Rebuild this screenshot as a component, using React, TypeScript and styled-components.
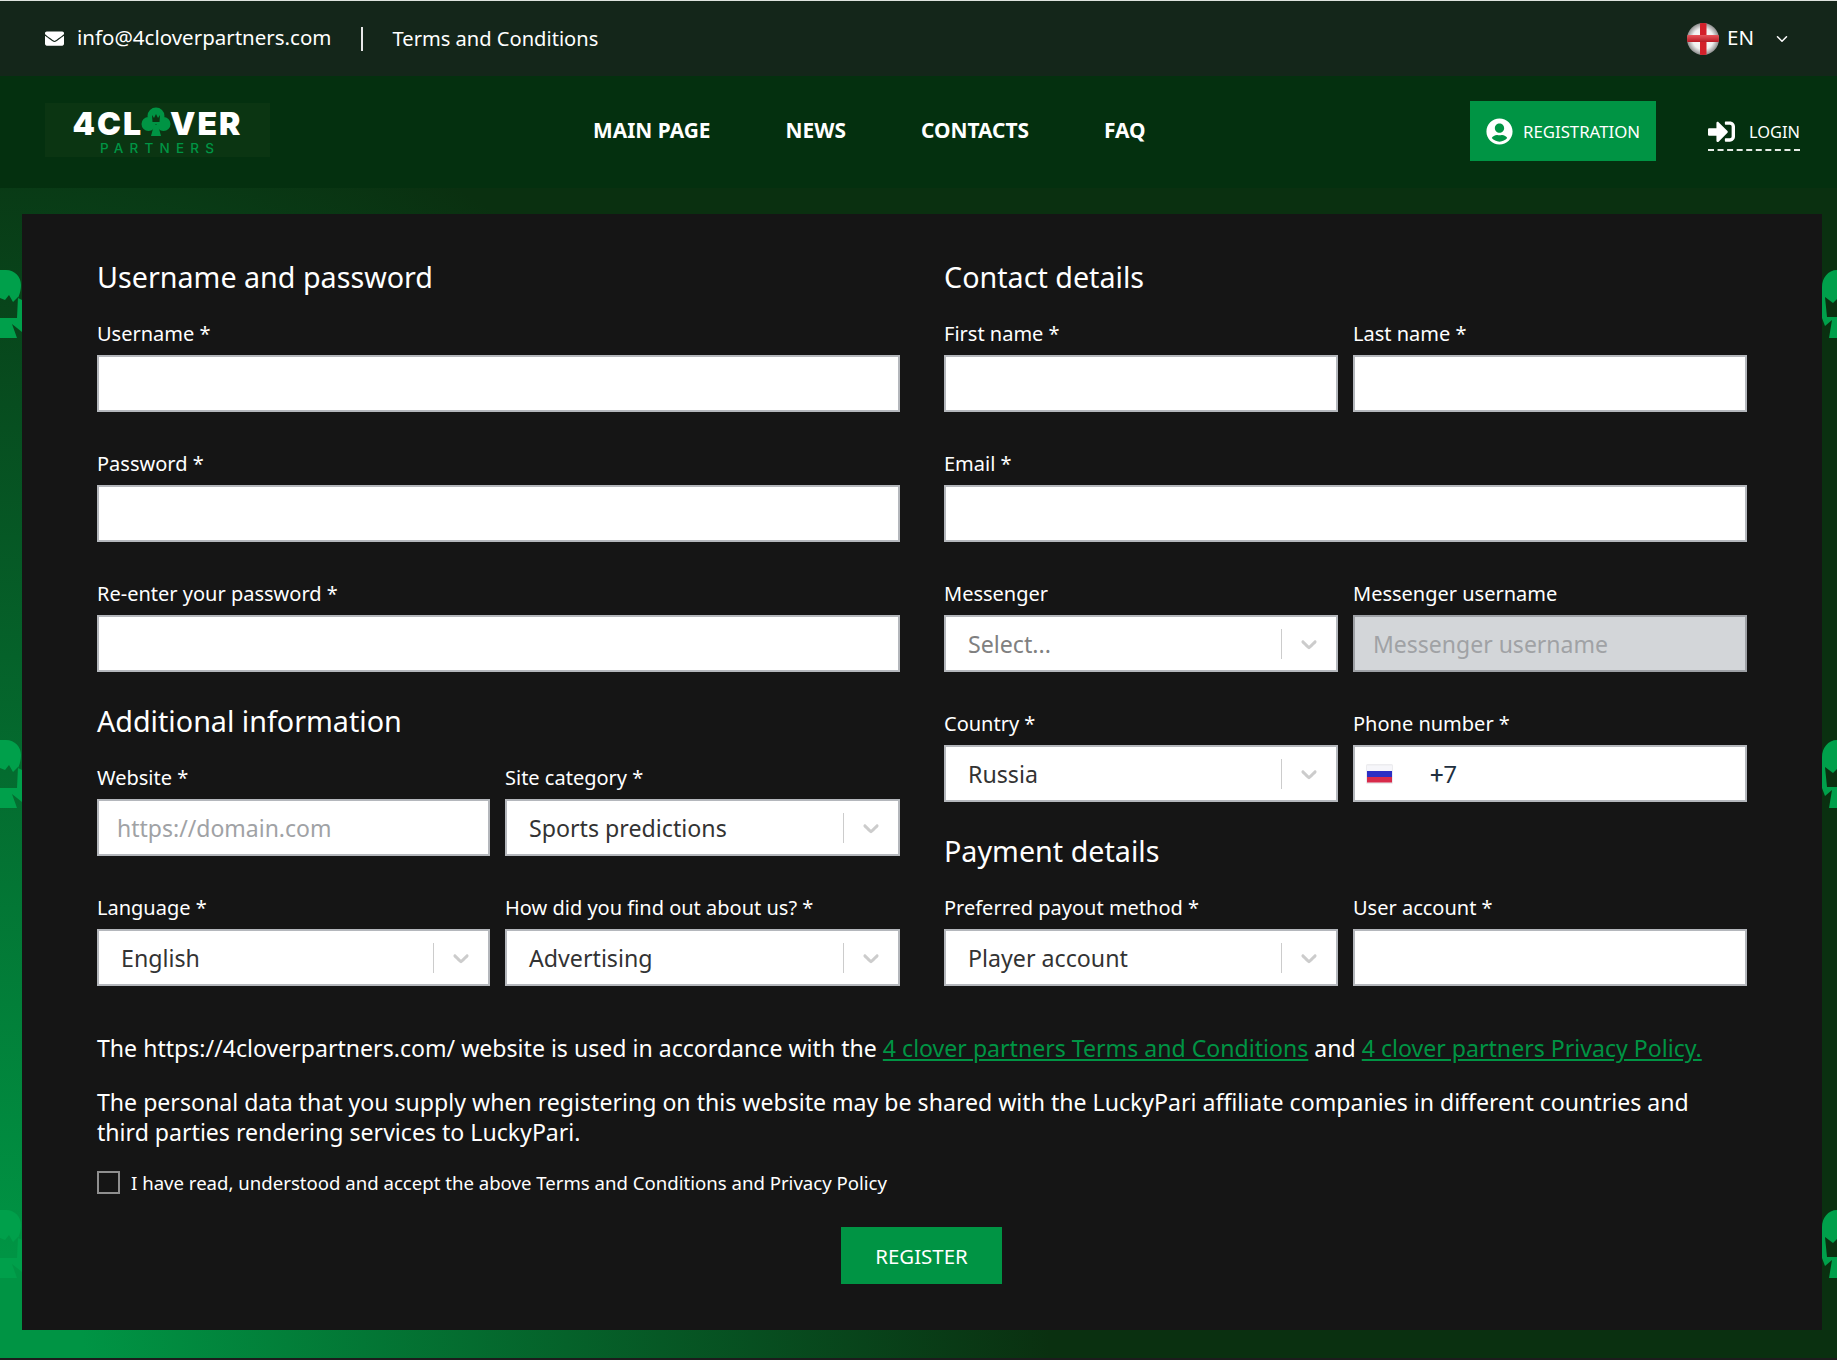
import React from "react";
import styled, { createGlobalStyle } from "styled-components";
import { FaEnvelope, FaUserCircle, FaSignInAlt } from "react-icons/fa";
import { ChevronDown } from "lucide-react";

const Global = createGlobalStyle`
  html, body { margin: 0; padding: 0; background: #151515; }
  * { box-sizing: border-box; }
  body { font-family: "Noto Sans", "Open Sans", sans-serif; color: #fff; }
  a { color: inherit; text-decoration: none; }
`;

const Page = styled.div`
  width: 1837px;
  height: 1360px;
  display: flex;
  flex-direction: column;
  border-top: 1px solid #dfe3df;
  border-bottom: 2px solid #1c1c1c;
  overflow: hidden;
`;

const TopBar = styled.div`
  height: 75px;
  flex: none;
  background: #14261a;
  display: flex;
  align-items: center;
  padding: 0 46px 0 45px;
  font-size: 20.5px;
`;

const Mail = styled.a`
  display: flex;
  align-items: center;
  gap: 13px;

  span {
    margin-top: -3px;
  }
`;

const Divider = styled.span`
  width: 2px;
  height: 24px;
  background: #e8e8e8;
  margin: 0 30px 0 29px;
`;

const TopLink = styled.a`
  font-size: 20.1px;
`;

const Lang = styled.div`
  margin-left: auto;
  display: flex;
  align-items: center;
  gap: 8px;
  font-size: 20.5px;

  span {
    margin-top: -3px;
  }
`;

const LangArrow = styled(ChevronDown)`
  margin-left: 11px;
`;

const NavBar = styled.header`
  height: 112px;
  flex: none;
  background: #04300f;
  display: flex;
  align-items: flex-start;
  padding: 25px 37px 0 45px;
`;

const Logo = styled.div`
  width: 225px;
  height: 54px;
  margin-top: 2px;
  background: #0b3512;
  display: flex;
  flex-direction: column;
  align-items: center;
  padding-top: 5px;
  margin-right: 323px;
`;

const LogoMain = styled.div`
  display: flex;
  align-items: center;
  height: 32px;
  font-family: Inter, sans-serif;
  font-weight: 900;
  font-size: 32px;
  line-height: 32px;
  letter-spacing: 2px;
  color: #fff;
`;

const LogoClover = styled.svg`
  width: 30px;
  height: 30px;
  margin: -4px -1px 0 -2px;
`;

const LogoSub = styled.div`
  font-family: Inter, sans-serif;
  font-weight: 500;
  font-size: 13.5px;
  line-height: 16px;
  letter-spacing: 6.2px;
  color: #009444;
  margin: 0 0 0 5px;
`;

const Menu = styled.nav`
  display: flex;
  gap: 75px;
  height: 60px;
  align-items: center;
`;

const MenuItem = styled.a`
  font-weight: 700;
  font-size: 20.9px;
  margin-top: -3px;
`;

const RegButton = styled.a`
  margin-left: auto;
  width: 186px;
  height: 60px;
  background: #009444;
  display: flex;
  align-items: center;
  justify-content: center;
  gap: 10px;
  font-size: 16.8px;
`;

const LoginLink = styled.a`
  margin-left: 52px;
  width: 92px;
  height: 50px;
  display: flex;
  align-items: center;
  justify-content: space-between;
  padding-top: 12px;
  border-bottom: 2px dashed #e6ece6;
  font-size: 16.4px;
`;

const Main = styled.main`
  flex: 1;
  position: relative;
  padding: 26px 15px 28px 22px;
  background: radial-gradient(ellipse 1050px 1300px at 0 100%, #009444 8%, #0a3010 100%);
`;

const Side = styled.svg<{ $left: boolean; $top: number }>`
  position: absolute;
  top: ${(p) => p.$top}px;
  ${(p) => (p.$left ? "left: 0;" : "right: 0;")}
  width: ${(p) => (p.$left ? 22 : 15)}px;
  height: 70px;
  fill: #00a04b;
  fill-rule: evenodd;
`;

const Panel = styled.section`
  position: relative;
  height: 1116px;
  background: #151515;
  padding: 45px 75px 0;
`;

const Columns = styled.div`
  display: grid;
  grid-template-columns: 803px 803px;
  column-gap: 44px;
`;

const Column = styled.div`
  display: flex;
  flex-direction: column;
`;

const Heading = styled.h2<{ $pull?: boolean }>`
  margin: ${(p) => (p.$pull ? "-7px" : "0")} 0 25px;
  font-size: 28.7px;
  line-height: 36px;
  font-weight: 400;
`;

const Pair = styled.div<{ $left?: boolean }>`
  display: grid;
  grid-template-columns: ${(p) => (p.$left ? "393px 395px" : "1fr 1fr")};
  column-gap: 15px;
`;

const Field = styled.div`
  margin-bottom: 38px;
  min-width: 0;
`;

const Label = styled.label`
  display: block;
  height: 28px;
  line-height: 28px;
  margin-bottom: 7px;
  font-size: 20px;
  white-space: nowrap;
`;

const TextInput = styled.input`
  display: block;
  width: 100%;
  height: 57px;
  border: 2px solid #b4b7bc;
  border-radius: 0;
  background: #fff;
  padding: 0 18px;
  outline: none;
  font-family: inherit;
  font-size: 23px;
  color: #333;

  &::placeholder {
    color: #a0a2a5;
    opacity: 1;
  }

  &:disabled {
    background: #d3d6d9;
    border-color: #9da0a5;
  }
`;

const SelectBox = styled.div`
  height: 57px;
  border: 2px solid #b4b7bc;
  background: #fff;
  display: flex;
  align-items: center;
  padding: 0 14px 0 22px;
  font-size: 23.2px;
  color: #333;
`;

const SelectValue = styled.span<{ $placeholder?: boolean }>`
  flex: 1;
  color: ${(p) => (p.$placeholder ? "#808080" : "#333")};
`;

const SelectSep = styled.span`
  width: 1px;
  height: 30px;
  background: #cccccc;
  margin-right: 14px;
`;

const SelectArrow = styled.svg`
  width: 26px;
  height: 26px;
  fill: #cccccc;
`;

const PhoneBox = styled.div`
  height: 57px;
  border: 2px solid #b4b7bc;
  background: #fff;
  display: flex;
  align-items: center;
  padding-left: 11px;
`;

const PhoneInput = styled.input`
  flex: 1;
  min-width: 0;
  margin-left: 37px;
  padding: 2px 0 0;
  border: 0;
  outline: none;
  background: transparent;
  font-family: Roboto, sans-serif;
  font-size: 24px;
  color: #212f40;
`;

const Notes = styled.div`
  margin-top: 9px;
`;

const Note = styled.p<{ $gap: number }>`
  margin: 0 0 ${(p) => p.$gap}px;
  font-size: 23.1px;
  line-height: 30px;
  max-width: 1630px;

  a {
    color: #009444;
    text-decoration: underline;
  }
`;

const Agree = styled.label`
  display: flex;
  align-items: center;
  gap: 11px;
  font-size: 18.6px;
  line-height: 22px;
`;

const Check = styled.input`
  appearance: none;
  width: 23px;
  height: 23px;
  margin: 0;
  border: 2px solid #8f8f8f;
  background: transparent;
`;

const Submit = styled.button`
  display: block;
  width: 161px;
  height: 57px;
  margin: 33px 0 0 744px;
  border: 0;
  background: #009444;
  color: #fff;
  font-family: inherit;
  font-size: 20.4px;
`;

const arrowPath =
  "M4.516 7.548c0.436-0.446 1.043-0.481 1.576 0l3.908 3.747 3.908-3.747c0.533-0.481 1.141-0.446 1.574 0 0.436 0.445 0.408 1.197 0 1.615-0.406 0.418-4.695 4.502-4.695 4.502-0.217 0.223-0.502 0.335-0.787 0.335s-0.57-0.112-0.789-0.335c0 0-4.287-4.084-4.695-4.502s-0.436-1.17 0-1.615z";

function Select({ value, placeholder }: { value: string; placeholder?: boolean }) {
  return (
    <SelectBox>
      <SelectValue $placeholder={placeholder}>{value}</SelectValue>
      <SelectSep />
      <SelectArrow viewBox="0 0 20 20">
        <path d={arrowPath} />
      </SelectArrow>
    </SelectBox>
  );
}

function EnglandFlag() {
  return (
    <svg width="32" height="32" viewBox="0 0 32 32">
      <defs>
        <radialGradient id="ball" cx="50%" cy="50%" r="50%">
          <stop offset="0%" stopColor="#ffffff" />
          <stop offset="65%" stopColor="#f0f0f0" />
          <stop offset="100%" stopColor="#8d8d8d" />
        </radialGradient>
        <linearGradient id="arm" x1="0" y1="0" x2="0" y2="1">
          <stop offset="0%" stopColor="#e8565c" />
          <stop offset="100%" stopColor="#b81a24" />
        </linearGradient>
        <clipPath id="ballClip">
          <circle cx="16" cy="16" r="16" />
        </clipPath>
      </defs>
      <circle cx="16" cy="16" r="16" fill="url(#ball)" />
      <g clipPath="url(#ballClip)">
        <rect x="13" y="0" width="6.5" height="32" fill="#d3202a" />
        <rect x="0" y="12" width="32" height="7" fill="url(#arm)" />
      </g>
    </svg>
  );
}

function RussiaFlag() {
  return (
    <svg width="27" height="20" viewBox="0 0 27 20">
      <rect x="0" y="0" width="27" height="20" rx="1.5" fill="#ececef" />
      <rect x="1" y="1.5" width="25" height="5.5" fill="#f6f6fa" />
      <rect x="1" y="7" width="25" height="6" fill="#2c2fc4" />
      <rect x="1" y="13" width="25" height="5.5" fill="#d82a4a" />
    </svg>
  );
}

function LeftClover({ top }: { top: number }) {
  return (
    <Side $left $top={top} viewBox="0 0 22 70">
      <path d="M0 0H6C15 0 21 7 21 15C21 21 19 26 18 28L22 30V62L12 54L17 68H0ZM0 28L5 30L9 25L13 32L18 27L17 48H0Z" />
    </Side>
  );
}

function RightClover({ top }: { top: number }) {
  return (
    <Side $left={false} $top={top} viewBox="0 0 15 70">
      <path d="M15 0C6 0 0 8 0 17V48L3 56L10 50L7 68H15ZM3 27L7 30L11 33L15 29V47H5Z" />
    </Side>
  );
}

export default function App() {
  return (
    <Page>
      <Global />
      <TopBar>
        <Mail href="#">
          <FaEnvelope size={19} />
          <span>info@4cloverpartners.com</span>
        </Mail>
        <Divider />
        <TopLink href="#">Terms and Conditions</TopLink>
        <Lang>
          <EnglandFlag />
          <span>EN</span>
          <LangArrow size={18} />
        </Lang>
      </TopBar>

      <NavBar>
        <Logo>
          <LogoMain>
            4CL
            <LogoClover viewBox="0 0 30 30">
              <circle cx="15" cy="9" r="8.5" fill="#009444" />
              <circle cx="7.5" cy="17" r="7" fill="#009444" />
              <circle cx="22.5" cy="17" r="7" fill="#009444" />
              <path d="M13 18H17L20 29H10Z" fill="#009444" />
              <path d="M11 8L13 11L15 7L17 11L19 8L18.5 15H11.5Z" fill="#0b3512" />
            </LogoClover>
            VER
          </LogoMain>
          <LogoSub>PARTNERS</LogoSub>
        </Logo>
        <Menu>
          <MenuItem href="#">MAIN PAGE</MenuItem>
          <MenuItem href="#">NEWS</MenuItem>
          <MenuItem href="#">CONTACTS</MenuItem>
          <MenuItem href="#">FAQ</MenuItem>
        </Menu>
        <RegButton href="#">
          <FaUserCircle size={27} />
          REGISTRATION
        </RegButton>
        <LoginLink href="#">
          <FaSignInAlt size={27} />
          LOGIN
        </LoginLink>
      </NavBar>

      <Main>
        <LeftClover top={82} />
        <LeftClover top={552} />
        <LeftClover top={1022} />
        <RightClover top={82} />
        <RightClover top={552} />
        <RightClover top={1022} />
        <Panel>
          <Columns>
            <Column>
              <Heading>Username and password</Heading>
              <Field>
                <Label>Username *</Label>
                <TextInput type="text" />
              </Field>
              <Field>
                <Label>Password *</Label>
                <TextInput type="password" />
              </Field>
              <Field>
                <Label>Re-enter your password *</Label>
                <TextInput type="password" />
              </Field>
              <Heading $pull>Additional information</Heading>
              <Pair $left>
                <Field>
                  <Label>Website *</Label>
                  <TextInput type="text" placeholder="https://domain.com" />
                </Field>
                <Field>
                  <Label>Site category *</Label>
                  <Select value="Sports predictions" />
                </Field>
                <Field>
                  <Label>Language *</Label>
                  <Select value="English" />
                </Field>
                <Field>
                  <Label>How did you find out about us? *</Label>
                  <Select value="Advertising" />
                </Field>
              </Pair>
            </Column>
            <Column>
              <Heading>Contact details</Heading>
              <Pair>
                <Field>
                  <Label>First name *</Label>
                  <TextInput type="text" />
                </Field>
                <Field>
                  <Label>Last name *</Label>
                  <TextInput type="text" />
                </Field>
              </Pair>
              <Field>
                <Label>Email *</Label>
                <TextInput type="email" />
              </Field>
              <Pair>
                <Field>
                  <Label>Messenger</Label>
                  <Select value="Select..." placeholder />
                </Field>
                <Field>
                  <Label>Messenger username</Label>
                  <TextInput type="text" placeholder="Messenger username" disabled />
                </Field>
                <Field>
                  <Label>Country *</Label>
                  <Select value="Russia" />
                </Field>
                <Field>
                  <Label>Phone number *</Label>
                  <PhoneBox>
                    <RussiaFlag />
                    <PhoneInput type="text" defaultValue="+7" />
                  </PhoneBox>
                </Field>
              </Pair>
              <Heading $pull>Payment details</Heading>
              <Pair>
                <Field>
                  <Label>Preferred payout method *</Label>
                  <Select value="Player account" />
                </Field>
                <Field>
                  <Label>User account *</Label>
                  <TextInput type="text" />
                </Field>
              </Pair>
            </Column>
          </Columns>
          <Notes>
            <Note $gap={24}>
              The https://4cloverpartners.com/ website is used in accordance with the{" "}
              <a href="#">4 clover partners Terms and Conditions</a> and{" "}
              <a href="#">4 clover partners Privacy Policy.</a>
            </Note>
            <Note $gap={24}>
              The personal data that you supply when registering on this website may be shared with the LuckyPari
              affiliate companies in different countries and third parties rendering services to LuckyPari.
            </Note>
            <Agree>
              <Check type="checkbox" />I have read, understood and accept the above Terms and Conditions and Privacy
              Policy
            </Agree>
            <Submit type="button">REGISTER</Submit>
          </Notes>
        </Panel>
      </Main>
    </Page>
  );
}
